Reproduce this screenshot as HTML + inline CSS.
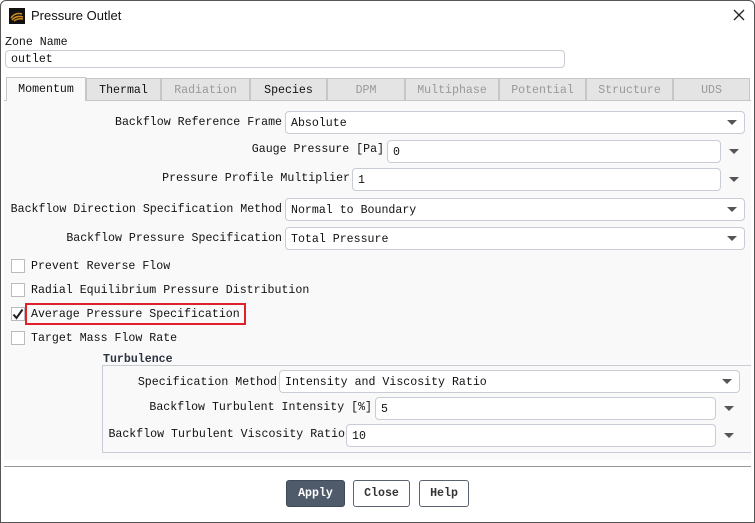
<!DOCTYPE html>
<html><head><style>
*{box-sizing:border-box;margin:0;padding:0}
body{width:755px;height:523px;background:#fff;position:relative;overflow:hidden;font-family:"Liberation Mono","Noto Sans CJK SC",monospace;font-size:11.6px;color:#111}
.a{position:absolute;white-space:nowrap}
#win{position:absolute;left:0;top:0;width:755px;height:523px;border:1px solid #555;border-radius:6px 6px 0 0;background:#fff}
.title{font-family:"Liberation Sans",sans-serif;font-size:13px;color:#111}
.panel{position:absolute;left:4px;top:100px;width:747px;height:360px;background:#f9f9fa}
.tab{position:absolute;top:78px;height:22px;border:1px solid #c6c6c6;border-bottom:none;background:#e4e4e4;text-align:center;line-height:23px;color:#111}
.tab.d{color:#999}
.tab.s{background:#f9f9fa;top:77px;height:24px}
.f{position:absolute;height:23px;border:1px solid #c8ccd4;border-radius:4px;background:#fff;padding-left:5px;line-height:23px}
.arr{position:absolute;width:0;height:0;border-left:5px solid transparent;border-right:5px solid transparent;border-top:5px solid #555}
.lbl{position:absolute;text-align:right;white-space:nowrap;line-height:14px}
.cb{position:absolute;left:11px;width:14px;height:14px;border:1px solid #bbb;background:#fff}
.btn{position:absolute;top:480px;height:27px;border:1px solid #5a6270;border-radius:3px;background:#fff;font-weight:bold;text-align:center;line-height:26px;color:#333}
</style></head><body>
<div id="win"></div>
<div class="a" style="left:9px;top:8px;width:16px;height:16px;background:#111"></div>
<svg class="a" style="left:9px;top:8px" width="16" height="16"><path d="M2 10 Q6 4 13 6 M3 12 Q7 7 14 9 M5 13 Q9 10 14 11" stroke="#c98b1e" stroke-width="1.6" fill="none"/></svg>
<div class="a title" style="left:31px;top:8px">Pressure Outlet</div>
<svg class="a" style="left:733px;top:9px" width="12" height="12"><path d="M1 1L11 11M11 1L1 11" stroke="#222" stroke-width="1.3"/></svg>
<div class="a" style="left:5px;top:36px">Zone Name</div>
<div class="f" style="left:5px;top:50px;width:560px;height:18px;line-height:18px;border-radius:4px">outlet</div>
<div class="panel"></div>
<div class="a" style="left:4px;top:100px;width:747px;height:1px;background:#c6c6c6"></div>
<div class="tab s" style="left:6px;width:80px">Momentum</div>
<div class="tab" style="left:86px;width:75px">Thermal</div>
<div class="tab d" style="left:161px;width:89px">Radiation</div>
<div class="tab" style="left:250px;width:77px">Species</div>
<div class="tab d" style="left:327px;width:78px">DPM</div>
<div class="tab d" style="left:405px;width:94px">Multiphase</div>
<div class="tab d" style="left:499px;width:87px">Potential</div>
<div class="tab d" style="left:586px;width:87px">Structure</div>
<div class="tab d" style="left:673px;width:77px">UDS</div>

<div class="lbl" style="right:473px;top:116px">Backflow Reference Frame</div>
<div class="f" style="left:285px;top:111px;width:460px">Absolute</div><div class="arr" style="left:727px;top:120px"></div>
<div class="lbl" style="right:371px;top:143px">Gauge Pressure [Pa]</div>
<div class="f" style="left:387px;top:140px;width:334px">0</div><div class="arr" style="left:729px;top:149px"></div>
<div class="lbl" style="right:405px;top:172px">Pressure Profile Multiplier</div>
<div class="f" style="left:352px;top:168px;width:369px">1</div><div class="arr" style="left:729px;top:177px"></div>
<div class="lbl" style="right:473px;top:203px">Backflow Direction Specification Method</div>
<div class="f" style="left:285px;top:198px;width:460px">Normal to Boundary</div><div class="arr" style="left:727px;top:207px"></div>
<div class="lbl" style="right:473px;top:232px">Backflow Pressure Specification</div>
<div class="f" style="left:285px;top:227px;width:460px">Total Pressure</div><div class="arr" style="left:727px;top:236px"></div>

<div class="cb" style="top:259px"></div><div class="a" style="left:31px;top:260px">Prevent Reverse Flow</div>
<div class="cb" style="top:283px"></div><div class="a" style="left:31px;top:284px">Radial Equilibrium Pressure Distribution</div>
<div class="cb" style="top:307px"></div>
<svg class="a" style="left:11px;top:307px" width="14" height="14"><path d="M2.5 7.5L5.5 11L11.5 2.5" stroke="#222" stroke-width="2" fill="none"/></svg>
<div class="a" style="left:31px;top:308px">Average Pressure Specification</div>
<div class="a" style="left:25px;top:303px;width:221px;height:22px;border:2px solid #e0202a"></div>
<div class="cb" style="top:331px"></div><div class="a" style="left:31px;top:332px">Target Mass Flow Rate</div>

<div class="a" style="left:103px;top:353px;font-weight:bold;color:#2a3340">Turbulence</div>
<div class="a" style="left:102px;top:365px;width:649px;height:88px;border:1px solid #c8ccd4;border-right:none"></div>
<div class="lbl" style="right:478px;top:376px">Specification Method</div>
<div class="f" style="left:279px;top:370px;width:461px">Intensity and Viscosity Ratio</div><div class="arr" style="left:722px;top:379px"></div>
<div class="lbl" style="right:383px;top:401px">Backflow Turbulent Intensity [%]</div>
<div class="f" style="left:375px;top:397px;width:341px">5</div><div class="arr" style="left:724px;top:406px"></div>
<div class="lbl" style="right:410px;top:428px">Backflow Turbulent Viscosity Ratio</div>
<div class="f" style="left:346px;top:424px;width:370px">10</div><div class="arr" style="left:724px;top:433px"></div>

<div class="a" style="left:4px;top:466px;width:747px;height:1px;background:#999"></div>
<div class="btn" style="left:286px;width:59px;background:#4f5b6b;color:#fff;border-color:#3f4a58">Apply</div>
<div class="btn" style="left:353px;width:57px">Close</div>
<div class="btn" style="left:419px;width:50px">Help</div>
</body></html>
